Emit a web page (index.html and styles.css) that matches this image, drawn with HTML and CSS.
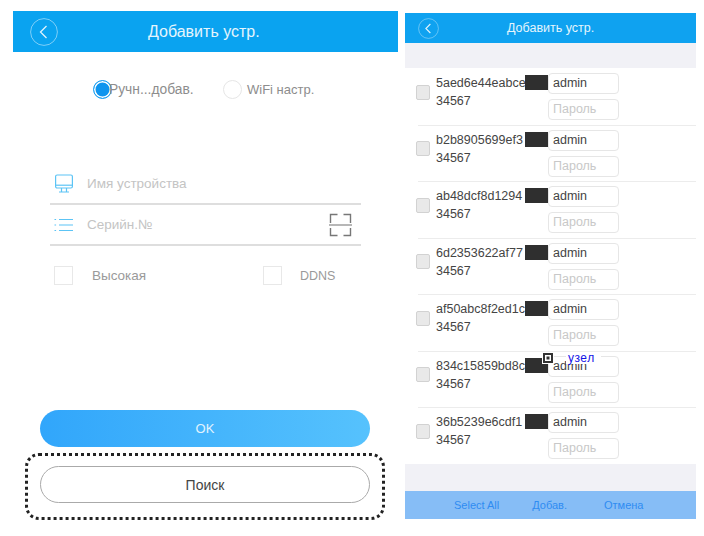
FILE: index.html
```html
<!DOCTYPE html>
<html lang="ru">
<head>
    <meta charset="UTF-8">
    <title>Добавить устр.</title>
    <link rel="stylesheet" href="styles.css">
</head>
<body>
    <div class="add-screen">
        <div class="add-header">
            <button class="back-button">
                <svg viewBox="0 0 28 28" fill="none" stroke="currentColor"><circle cx="14" cy="14" r="13.4" stroke-opacity="0.55"/><polyline points="16.5 8 10.5 14 16.5 20" stroke-width="1.3"/></svg>
            </button>
            <h2>Добавить устр.</h2>
        </div>
        <div class="mode-row">
            <div class="mode mode-manual"><span class="radio radio-on"></span><span>Ручн...добав.</span></div>
            <div class="mode mode-wifi"><span class="radio"></span><span>WiFi настр.</span></div>
        </div>
        <div class="field-list">
            <div class="field">
                <svg class="field-icon" viewBox="0 0 20 20" fill="none" stroke="#5cc4f5" stroke-width="1.2"><rect x="1.6" y="1" width="16.8" height="13" rx="1.5"/><line x1="1.6" y1="11.2" x2="18.4" y2="11.2"/><path d="M7.5 14v3.5M12.5 14v3.5M5 18h10"/></svg>
                <span>Имя устройства</span>
            </div>
            <div class="field">
                <svg class="field-icon" viewBox="0 0 20 20" fill="none" stroke="#5cc4f5" stroke-width="1.2"><path d="M5 4.5h14M5 10h14M5 15.5h14"/><path d="M0.5 4.5h1.6M0.5 10h1.6M0.5 15.5h1.6"/></svg>
                <span>Серийн.№</span>
                <svg class="scan-icon" viewBox="0 0 23 24" fill="none" stroke="#777" stroke-width="1.4"><path d="M1.5 10V1.5h7M14.5 1.5h7V10M1.5 15v7.5h7M14.5 22.5h7V15"/><line x1="0" y1="12" x2="23" y2="12" stroke="#999"/></svg>
            </div>
        </div>
        <div class="option-row">
            <div class="option option-high"><span class="check-box"></span><span>Высокая</span></div>
            <div class="option"><span class="check-box"></span><span class="option-ddns">DDNS</span></div>
        </div>
        <button class="ok-button">OK</button>
        <div class="search-box">
            <button class="search-button">Поиск</button>
        </div>
    </div>

    <div class="list-screen">
        <div class="list-header">
            <button class="back-button back-small">
                <svg viewBox="0 0 28 28" fill="none" stroke="currentColor"><circle cx="14" cy="14" r="13.2" stroke-opacity="0.55"/><polyline points="16.5 8 10.5 14 16.5 20" stroke-width="1.5"/></svg>
            </button>
            <h2>Добавить устр.</h2>
        </div>
        <div class="gray-band"></div>
        <ul class="device-list">
            <li class="device">
                <span class="device-check"></span>
                <div class="device-id"><div class="serial"><span>5aed6e44eabce</span><i class="mask"></i></div><div>34567</div></div>
                <div class="device-inputs"><div class="login">admin</div><div class="login login-empty">Пароль</div></div>
            </li>
            <li class="device">
                <span class="device-check"></span>
                <div class="device-id"><div class="serial"><span>b2b8905699ef3</span><i class="mask"></i></div><div>34567</div></div>
                <div class="device-inputs"><div class="login">admin</div><div class="login login-empty">Пароль</div></div>
            </li>
            <li class="device">
                <span class="device-check"></span>
                <div class="device-id"><div class="serial"><span>ab48dcf8d1294</span><i class="mask"></i></div><div>34567</div></div>
                <div class="device-inputs"><div class="login">admin</div><div class="login login-empty">Пароль</div></div>
            </li>
            <li class="device">
                <span class="device-check"></span>
                <div class="device-id"><div class="serial"><span>6d2353622af77</span><i class="mask"></i></div><div>34567</div></div>
                <div class="device-inputs"><div class="login">admin</div><div class="login login-empty">Пароль</div></div>
            </li>
            <li class="device">
                <span class="device-check"></span>
                <div class="device-id"><div class="serial"><span>af50abc8f2ed1c</span><i class="mask"></i></div><div>34567</div></div>
                <div class="device-inputs"><div class="login">admin</div><div class="login login-empty">Пароль</div></div>
            </li>
            <li class="device">
                <span class="device-check"></span>
                <div class="device-id"><div class="serial"><span>834c15859bd8c</span><i class="mask"></i></div><div>34567</div></div>
                <div class="device-inputs"><div class="login">admin</div><div class="login login-empty">Пароль</div></div>
                <div class="node-tip"><span class="node-mark"></span><span class="node-label">узел</span></div>
            </li>
            <li class="device">
                <span class="device-check"></span>
                <div class="device-id"><div class="serial"><span>36b5239e6cdf1</span><i class="mask"></i></div><div>34567</div></div>
                <div class="device-inputs"><div class="login">admin</div><div class="login login-empty">Пароль</div></div>
            </li>
        </ul>
        <div class="gray-band band-bottom"></div>
        <div class="list-footer">
            <span>Select All</span>
            <span>Добав.</span>
            <span>Отмена</span>
        </div>
    </div>
</body>
</html>
```

FILE: styles.css
```css
* {
    box-sizing: border-box;
}
body {
    margin: 0;
    width: 704px;
    height: 536px;
    overflow: hidden;
    background: #fff;
    display: flex;
    font-family: "Liberation Sans", Arial, sans-serif;
    color: #333;
}
button {
    font-family: inherit;
    border: none;
    background: none;
    padding: 0;
}
h2 {
    margin: 0;
    font-weight: normal;
}
.add-screen {
    width: 385px;
    margin: 11px 0 0 13px;
    display: flex;
    flex-direction: column;
}
.add-header {
    height: 41px;
    flex-shrink: 0;
    background: #0aa3f0;
    color: #e4f5fd;
    display: flex;
    align-items: center;
    padding-left: 17px;
}
.add-header h2 {
    font-size: 16px;
    margin-left: 90px;
}
.back-button {
    width: 28px;
    height: 28px;
    color: #dff3fd;
    flex-shrink: 0;
}
.back-button svg {
    display: block;
    width: 100%;
    height: 100%;
}
.mode-row {
    display: flex;
    height: 20px;
    margin-top: 27px;
    padding-left: 80px;
    font-size: 13px;
    color: #8d8d8d;
}
.mode {
    display: flex;
    align-items: center;
}
.mode-manual {
    width: 130px;
    font-size: 13.8px;
}
.mode-manual .radio {
    margin-right: -3px;
}
.mode-wifi .radio {
    margin-right: 5px;
}
.radio {
    width: 19px;
    height: 19px;
    border-radius: 50%;
    border: 1px solid #e6e6e6;
}
.radio-on {
    border: 1.5px solid #1da1f2;
    background: #0f95ee;
    box-shadow: inset 0 0 0 1.5px #fff;
}
.field-list {
    margin: 65px 37px 0;
}
.field {
    height: 41px;
    border-bottom: 2px solid #dedede;
    display: flex;
    align-items: center;
    font-size: 13.5px;
    color: #c4c4c4;
    padding: 0 9px 0 4px;
}
.field-icon {
    width: 20px;
    height: 20px;
    margin-right: 13px;
}
.scan-icon {
    width: 23px;
    height: 24px;
    margin-left: auto;
}
.option-row {
    display: flex;
    margin: 20px 0 0 41px;
    font-size: 13.5px;
    color: #9a9a9a;
}
.option {
    display: flex;
    align-items: center;
    gap: 18px;
}
.option-high {
    width: 209px;
    gap: 19px;
}
.option-ddns {
    font-size: 12.5px;
}
.check-box {
    width: 19px;
    height: 19px;
    border: 1px solid #e8e8e8;
}
.ok-button {
    width: 330px;
    height: 37px;
    margin: 125px 0 0 27px;
    flex-shrink: 0;
    border-radius: 19px;
    background: linear-gradient(to right, #31a6fb, #56c2fd);
    color: #e2f3fe;
    font-size: 13px;
}
.search-box {
    width: 360px;
    height: 67px;
    margin: 6px 0 0 12px;
    flex-shrink: 0;
    padding: 10px 12px;
    border: 3px dotted #222;
    border-radius: 14px;
}
.search-button {
    display: block;
    width: 100%;
    height: 37px;
    border: 1px solid #aaa;
    border-radius: 19px;
    color: #444;
    font-size: 14px;
}
.list-screen {
    width: 291px;
    margin: 13px 0 0 7px;
}
.list-header {
    height: 30px;
    background: #0fa2f0;
    color: #e4f5fd;
    display: flex;
    align-items: center;
    padding-left: 13px;
}
.list-header h2 {
    font-size: 12.5px;
    margin-left: 68px;
}
.back-small {
    width: 21px;
    height: 21px;
}
.gray-band {
    height: 25px;
    background: #f1f1f6;
}
.device-list {
    list-style: none;
    margin: 0;
    padding: 0;
}
.device {
    position: relative;
    height: 56.5px;
    display: flex;
    align-items: center;
    padding-left: 11px;
    font-size: 12.5px;
    color: #444;
}
.device + .device::before {
    content: "";
    position: absolute;
    top: 0;
    left: 13px;
    right: 0;
    border-top: 1px solid #ececec;
}
.device-check {
    width: 14px;
    height: 15px;
    margin-top: -8px;
    flex-shrink: 0;
    border: 1px solid #d2d2d2;
    border-radius: 2px;
    background: #e9e9e9;
}
.device-id {
    width: 112px;
    margin-left: 6px;
    line-height: 18px;
    align-self: flex-start;
    margin-top: 6px;
}
.serial {
    display: flex;
    white-space: nowrap;
}
.serial span {
    flex: 1;
    min-width: 0;
    overflow: hidden;
}
.mask {
    width: 23px;
    height: 15px;
    margin-top: 1px;
    flex-shrink: 0;
    background: #2f2f2f;
}
.device-inputs {
    display: flex;
    flex-direction: column;
    gap: 5px;
    margin-top: 1px;
}
.login {
    width: 71px;
    height: 21px;
    border: 1px solid #e6e6e6;
    border-radius: 4px;
    padding-left: 4px;
    line-height: 19px;
    background: #fff;
}
.login-empty {
    color: #c8c8c8;
}
.node-tip {
    position: absolute;
    top: 1px;
    left: 138px;
    display: flex;
    align-items: center;
}
.node-mark {
    width: 10px;
    height: 10px;
    border: 2px solid #333;
    outline: 1px solid #fff;
    background: #fff;
    box-shadow: inset 0 0 0 1.5px #fff, inset 0 0 0 4px #333;
}
.node-label {
    margin-left: 13px;
    padding: 0 6px 0 2px;
    background: #fff;
    color: #1414e6;
    font-size: 12px;
    letter-spacing: 0.5px;
    line-height: 12px;
}
.band-bottom {
    height: 27px;
}
.list-footer {
    height: 28px;
    background: #86bdf6;
    color: #2f8cf2;
    font-size: 11px;
    display: flex;
    align-items: center;
    padding-left: 49px;
}
.list-footer span:nth-child(2) {
    margin-left: 33px;
}
.list-footer span:nth-child(3) {
    margin-left: 37px;
}
```
